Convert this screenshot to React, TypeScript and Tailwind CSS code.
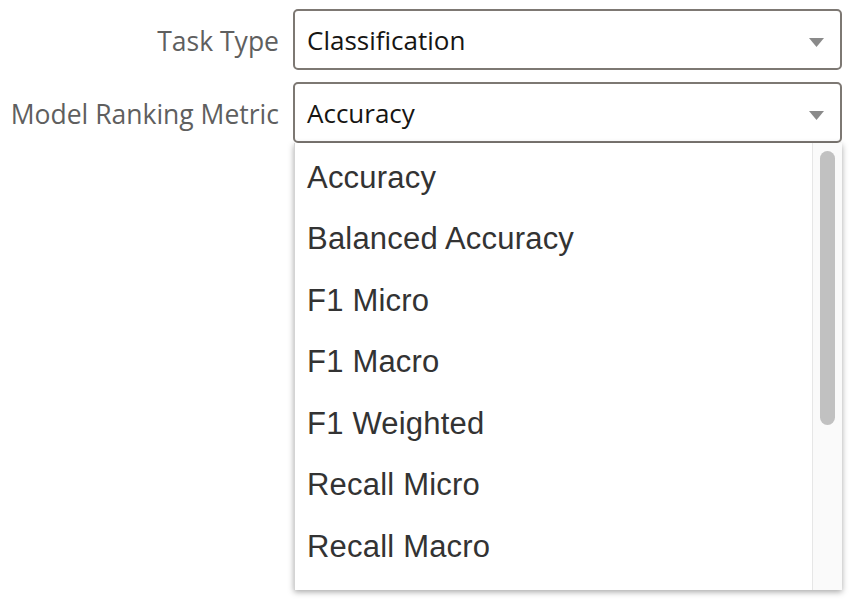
import React from "react";

const items = [
  "Accuracy",
  "Balanced Accuracy",
  "F1 Micro",
  "F1 Macro",
  "F1 Weighted",
  "Recall Micro",
  "Recall Macro",
];

function Arrow() {
  return (
    <svg width="15" height="9" viewBox="0 0 15 9" className="shrink-0 mt-[5px]">
      <polygon points="0,0 15,0 7.5,9" fill="#8a8a8a" />
    </svg>
  );
}

function Select({ value }: { value: string }) {
  return (
    <div className="h-[61px] w-[549px] border-2 border-[#7d7873] rounded-[5px] bg-white flex items-center pl-[12px] pr-[16px]">
      <span className="flex-1 text-[26px] text-[#161513] pt-[1px]">{value}</span>
      <Arrow />
    </div>
  );
}

export default function App() {
  return (
    <div
      className="relative w-[850px] h-[600px] bg-white overflow-hidden"
      style={{ fontFamily: '"Open Sans", sans-serif' }}
    >
      <div className="pt-[9px] grid grid-cols-[279px_549px] gap-x-[14px] gap-y-[12px] items-center">
        <div className="text-right text-[26.5px] text-[#5f5f5f] pt-[5px] whitespace-nowrap">Task Type</div>
        <Select value="Classification" />
        <div className="text-right text-[26.5px] text-[#5f5f5f] pt-[4px] whitespace-nowrap">Model Ranking Metric</div>
        <Select value="Accuracy" />
      </div>
      <div className="absolute left-[294px] top-[143px] w-[548px] h-[447px] bg-white border-l border-[#d4d4d4] shadow-[0_2px_6px_rgba(0,0,0,0.35)] flex overflow-hidden">
        <div
          className="flex-1 pt-[4px] overflow-hidden"
          style={{ fontFamily: '"Liberation Sans", Arial, sans-serif' }}
        >
          {items.map((t) => (
            <div
              key={t}
              className="h-[61.5px] flex items-center pl-[12px] text-[31px] tracking-[0.2px] text-[#333333]"
            >
              {t}
            </div>
          ))}
        </div>
        <div className="w-[30px] h-full bg-[#fafafa] border-l border-[#e6e6e6] pt-[8px] pl-[7px]">
          <div className="w-[15px] h-[274px] rounded-full bg-[#c1c1c1]" />
        </div>
      </div>
    </div>
  );
}
